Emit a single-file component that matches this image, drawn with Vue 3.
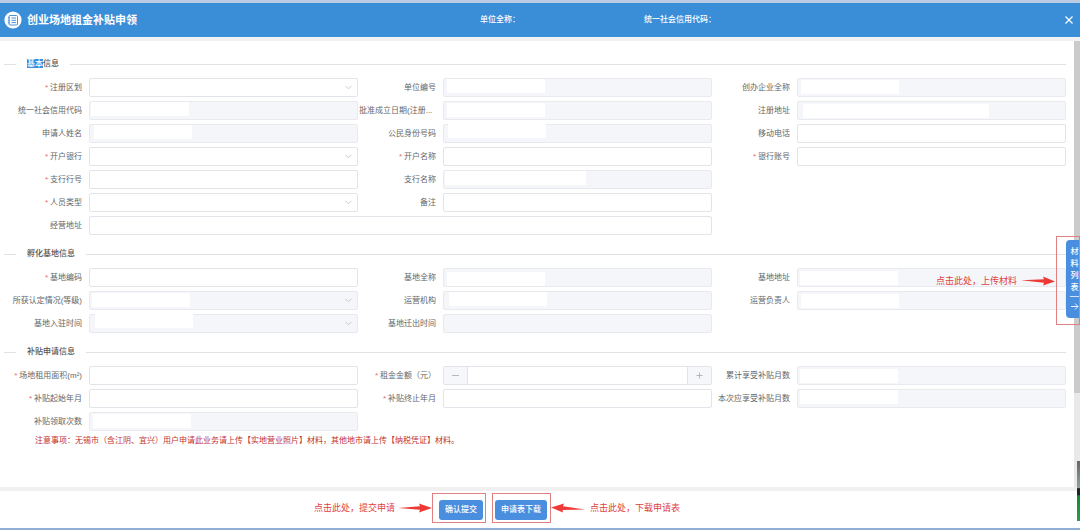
<script setup>
const sections = [
  {
    id: 'basic',
    marked: '基本',
    title: '信息',
    fields: [
      { label: '注册区划', required: true, type: 'select' },
      { label: '单位编号', disabled: true, mask: [4, 1, 98] },
      { label: '创办企业全称', disabled: true, mask: [4, 2, 98] },
      { label: '统一社会信用代码', disabled: true, mask: [2, 1, 98] },
      { label: '批准成立日期(注册...', clipped: true, disabled: true, mask: [4, 2, 98] },
      { label: '注册地址', disabled: true, mask: [6, 3, 186] },
      { label: '申请人姓名', disabled: true, mask: [5, 1, 98] },
      { label: '公民身份号码', disabled: true, mask: [5, 0, 98] },
      { label: '移动电话' },
      { label: '开户银行', required: true, type: 'select' },
      { label: '开户名称', required: true },
      { label: '银行账号', required: true },
      { label: '支行行号', required: true },
      { label: '支行名称', disabled: true, rowEnd: true, mask: [2, 1, 141] },
      { label: '人员类型', required: true, type: 'select' },
      { label: '备注', rowEnd: true },
      { label: '经营地址', wide: true },
    ],
  },
  {
    id: 'base',
    title: '孵化基地信息',
    fields: [
      { label: '基地编码', required: true },
      { label: '基地全称', disabled: true, mask: [4, 4, 98] },
      { label: '基地地址', disabled: true, mask: [3, 3, 98] },
      { label: '所获认定情况(等级)', type: 'select', disabled: true, mask: [3, 2, 98] },
      { label: '运营机构', disabled: true, mask: [6, 1, 98] },
      { label: '运营负责人', disabled: true, mask: [4, 3, 98] },
      { label: '基地入驻时间', type: 'select', disabled: true, mask: [6, 0, 98] },
      { label: '基地迁出时间', disabled: true },
    ],
  },
  {
    id: 'subsidy',
    title: '补贴申请信息',
    fields: [
      { label: '场地租用面积(m²)', required: true },
      { label: '租金金额（元）', required: true, type: 'number' },
      { label: '累计享受补贴月数', disabled: true, mask: [3, 3, 98] },
      { label: '补贴起始年月', required: true },
      { label: '补贴终止年月', required: true },
      { label: '本次应享受补贴月数', disabled: true, mask: [3, 1, 98] },
      { label: '补贴领取次数', disabled: true, mask: [4, 2, 98] },
    ],
  },
]

const maskStyle = ([left, top, width]) => ({
  left: `${left}px`,
  top: `${top}px`,
  width: `${width}px`,
})
</script>

<template>
  <div class="page">
    <header class="bar">
      <div class="brand">
        <svg class="logo" viewBox="0 0 18 18" aria-hidden="true">
          <circle cx="9" cy="9" r="8.6" fill="#fff" />
          <g fill="none" stroke="#4b94d6" stroke-width="1">
            <rect x="5" y="4.5" width="8.5" height="9.5" rx="1" />
            <path d="M7.5 7h4.5M7.5 9.3h4.5M7.5 11.6h4.5M3.8 6.8h2.2M3.8 9.3h2.2M3.8 11.8h2.2" />
          </g>
        </svg>
        <h1>创业场地租金补贴申领</h1>
      </div>
      <span class="meta">单位全称：</span>
      <div class="bar-end">
        <span class="meta">统一社会信用代码：</span>
        <button class="close" type="button" aria-label="关闭">
          <svg viewBox="0 0 8 8"><path d="M.5.5l7 7M7.5.5l-7 7" fill="none" stroke="#fff" stroke-width="1.2" /></svg>
        </button>
      </div>
    </header>

    <div class="body">
      <main class="content">
        <section v-for="s in sections" :key="s.id" class="section">
          <h2 class="heading">
            <span><mark v-if="s.marked">{{ s.marked }}</mark>{{ s.title }}</span>
          </h2>
          <div class="grid">
            <div
              v-for="(f, i) in s.fields"
              :key="f.label"
              class="field"
              :class="{ wide: f.wide, 'row-end': f.rowEnd }"
            >
              <label :for="`${s.id}-${i}`" :class="{ clipped: f.clipped }">
                <i v-if="f.required">*</i>{{ f.label }}
              </label>
              <div class="control">
                <template v-if="f.type === 'select'">
                  <select :id="`${s.id}-${i}`" :disabled="f.disabled"><option></option></select>
                  <svg class="chevron" viewBox="0 0 7 5" aria-hidden="true">
                    <path d="M.5.8l3 3 3-3" fill="none" stroke="#c0c4cc" stroke-width=".9" />
                  </svg>
                </template>
                <div v-else-if="f.type === 'number'" class="stepper">
                  <button type="button" aria-label="减少">
                    <svg viewBox="0 0 7 7"><path d="M0 3.5h7" stroke="#a4a7ad" stroke-width=".8" /></svg>
                  </button>
                  <input :id="`${s.id}-${i}`" type="text" inputmode="decimal" />
                  <button type="button" aria-label="增加">
                    <svg viewBox="0 0 7 7"><path d="M.5 3.5h6M3.5.5v6" stroke="#a4a7ad" stroke-width=".8" /></svg>
                  </button>
                </div>
                <input v-else :id="`${s.id}-${i}`" type="text" :disabled="f.disabled" />
                <span v-if="f.mask" class="mask" :style="maskStyle(f.mask)"></span>
              </div>
            </div>
          </div>
        </section>
        <p class="notice">注意事项：无锡市（含江阴、宜兴）用户申请此业务请上传【实地营业照片】材料，其他地市请上传【纳税凭证】材料。</p>
      </main>
      <div class="track"><div class="thumb"></div></div>
    </div>

    <footer class="footer">
      <span class="hint">点击此处，提交申请</span>
      <svg class="arrow" viewBox="0 0 34 10" aria-hidden="true">
        <path d="M0 5L22 3.2 21 .5 34 5 21 9.5 22 6.8z" fill="#ee3a36" />
      </svg>
      <div class="frame first"><button class="action" type="button">确认提交</button></div>
      <div class="frame second"><button class="action" type="button">申请表下载</button></div>
      <svg class="arrow" viewBox="0 0 34 10" aria-hidden="true">
        <path d="M34 6.5L12 3.2 13 .5 0 4.5 12 9.5 11.5 7z" fill="#ee3a36" />
      </svg>
      <span class="hint">点击此处，下载申请表</span>
    </footer>

    <aside class="side">
      <span class="hint">点击此处，上传材料</span>
      <svg class="arrow" viewBox="0 0 34 10" aria-hidden="true">
        <path d="M0 4.2L23 3.2 22 .5 34 5.5 22 9.5 23 6.8z" fill="#ee3a36" />
      </svg>
      <div class="side-frame">
        <button class="side-tab" type="button">
          <span>材</span><span>料</span><span>列</span><span>表</span>
          <svg viewBox="0 0 9 9" aria-hidden="true">
            <path d="M1 4.5h7M5 1.5l3 3-3 3" fill="none" stroke="#fff" stroke-width=".9" />
          </svg>
        </button>
      </div>
    </aside>
    <div class="widget"></div>
  </div>
</template>

<style>
body {
  margin: 0;
}
</style>

<style scoped>
* {
  box-sizing: border-box;
}
.page {
  position: relative;
  display: flex;
  flex-direction: column;
  min-height: 100vh;
  overflow: hidden;
  border-top: 3px solid #bccbe4;
  border-bottom: 2px solid #8fb0d4;
  background: #fff;
  color: #666;
  font-family: "Liberation Sans", "Noto Sans CJK SC", sans-serif;
  font-size: 8px;
  line-height: 12px;
}
button,
input,
select {
  margin: 0;
  padding: 0;
  border: 0;
  font: inherit;
  color: inherit;
}
svg {
  display: block;
}
.bar {
  display: grid;
  grid-template-columns: 480fr 164fr 436fr;
  align-items: center;
  height: 34px;
  background: #3a8ed8;
  color: #fff;
}
.brand {
  display: flex;
  align-items: center;
  gap: 5px;
  padding-left: 4px;
}
.logo {
  width: 18px;
  height: 18px;
}
h1 {
  margin: 0;
  font-size: 11px;
  line-height: 16px;
  font-weight: 700;
}
.meta {
  font-weight: 500;
  white-space: nowrap;
}
.bar-end {
  display: flex;
  align-items: center;
  justify-content: space-between;
  padding-right: 7px;
}
.close {
  width: 8px;
  height: 8px;
  background: none;
}
.body {
  display: flex;
  flex: 1;
  border-top: 4px solid #f0f2f3;
}
.content {
  flex: 1;
  min-width: 0;
  padding: 15px 8px 16px 4px;
}
.section + .section {
  margin-top: 11px;
}
.heading {
  display: flex;
  align-items: center;
  gap: 11px;
  height: 16px;
  margin: 0 0 6px;
  color: #555;
  font-size: 8px;
  font-weight: 500;
}
.heading::before,
.heading::after {
  content: "";
  width: 12px;
  height: 1px;
  background: #e0e2e6;
}
.heading::after {
  flex: 1;
}
mark {
  background: #3a8ee0;
  color: #fff;
}
.grid {
  display: grid;
  grid-template-columns: repeat(3, 1fr);
  row-gap: 4px;
}
.field {
  display: flex;
  align-items: center;
  height: 19px;
}
.field.row-end {
  grid-column: 2 / 4;
  width: 50%;
}
.field.wide {
  grid-column: 1 / 3;
}
label {
  flex: none;
  width: 85px;
  padding-right: 7px;
  text-align: right;
  white-space: nowrap;
}
label.clipped {
  padding-right: 0;
  padding-left: 1px;
  text-align: left;
}
label i {
  margin-right: 2px;
  color: #dc7070;
  font-style: normal;
}
.control {
  position: relative;
  flex: 1;
  height: 100%;
  min-width: 0;
}
.control input,
.control select {
  display: block;
  width: 100%;
  height: 100%;
  padding: 0 5px;
  border: 1px solid #e2e4e9;
  border-radius: 2px;
  background: #fff;
  appearance: none;
}
.control input:disabled,
.control select:disabled {
  border-color: #e8eaef;
  background: #f5f6fa;
  opacity: 1;
}
.chevron {
  position: absolute;
  top: 7px;
  right: 6px;
  width: 7px;
  height: 5px;
}
.mask {
  position: absolute;
  height: 14px;
  background: #fff;
}
.stepper {
  display: flex;
  height: 100%;
  border: 1px solid #e2e4e9;
  border-radius: 2px;
  overflow: hidden;
}
.stepper button {
  display: flex;
  flex: none;
  align-items: center;
  justify-content: center;
  width: 23px;
  background: #f5f7fa;
}
.stepper button svg {
  width: 7px;
  height: 7px;
}
.stepper input {
  flex: 1;
  min-width: 0;
  border-width: 0 1px;
  border-radius: 0;
}
.notice {
  margin: 4px 0 0 31px;
  color: #c2332f;
}
.track {
  flex: none;
  width: 6px;
  background: #e9e9e9;
}
.thumb {
  height: 79%;
  background: #cbcbcb;
}
.footer {
  display: flex;
  align-items: center;
  justify-content: center;
  height: 41px;
  padding: 0 86px 4px 0;
  border-top: 4px solid #f0f0f0;
}
.hint {
  color: #e0413e;
  font-size: 9px;
  white-space: nowrap;
}
.arrow {
  flex: none;
  width: 34px;
  height: 10px;
}
.footer .hint:first-child {
  margin-right: 3px;
}
.footer .hint:last-child {
  margin-left: 5px;
}
.frame {
  height: 30px;
  padding-top: 6px;
  border: 1px solid #e08080;
}
.frame.first {
  margin-right: 6px;
  padding-right: 2px;
  padding-left: 6px;
}
.frame.second {
  padding-right: 3px;
  padding-left: 2px;
}
.action {
  display: block;
  height: 20px;
  padding: 0 6px;
  border-radius: 3px;
  background: #4a8ee0;
  color: #fff;
  font-weight: 500;
  white-space: nowrap;
}
.side {
  position: absolute;
  top: 233px;
  right: 0;
  display: flex;
  align-items: center;
}
.side .hint {
  margin-right: 4px;
}
.side-frame {
  margin-left: 1px;
  padding: 3px 0 6px 9px;
  border: 1px solid #e08080;
}
.side-tab {
  display: flex;
  flex-direction: column;
  align-items: center;
  width: 13px;
  height: 78px;
  padding: 6px 0 0 4px;
  border-radius: 4px 0 0 4px;
  background: #4a8ee0;
  color: #fff;
  font-weight: 500;
}
.side-tab svg {
  width: 9px;
  height: 20px;
  margin-top: 2px;
  border-top: 1px solid #d4e4f8;
}
.widget {
  position: absolute;
  right: 0;
  bottom: 7px;
  width: 3px;
  height: 60px;
  background: linear-gradient(#666 0, #8ba596 45%, #222 46%, #222 56%, #18853a 58%, #2b9c4c 100%);
}
</style>
